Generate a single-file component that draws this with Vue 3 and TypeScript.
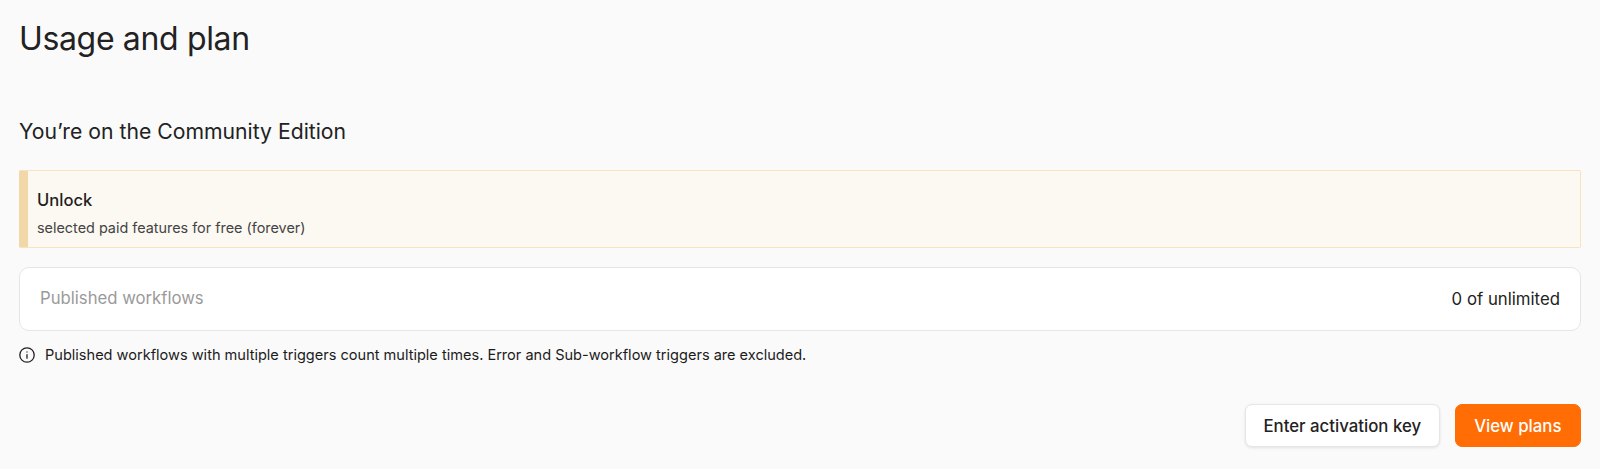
<script setup lang="ts">
</script>

<template>
  <main class="page">
    <h1 class="title">Usage and plan</h1>
    <h2 class="edition">You’re on the Community Edition</h2>
    <section class="callout">
      <div class="callout-title">Unlock</div>
      <div class="callout-text">selected paid features for free (forever)</div>
    </section>
    <section class="usage">
      <span class="usage-label">Published workflows</span>
      <span class="usage-value">0 of unlimited</span>
    </section>
    <p class="note">
      <svg class="info" viewBox="0 0 16 16" fill="none" stroke="#222" stroke-width="1.3" stroke-linecap="round">
        <circle cx="8" cy="8" r="7.2" />
        <path d="M8 7.6v3.6M8 4.9v.1" />
      </svg>
      Published workflows with multiple triggers count multiple times. Error and Sub-workflow triggers are excluded.
    </p>
    <div class="actions">
      <button class="btn secondary">Enter activation key</button>
      <button class="btn primary">View plans</button>
    </div>
  </main>
</template>

<style scoped>
.page {
  height: 469px;
  box-sizing: border-box;
  padding: 19px 19px 0;
  background: #fafafa;
  font-family: Inter, "Liberation Sans", sans-serif;
  color: #222;
  display: flex;
  flex-direction: column;
}
.title {
  margin: 0;
  font-size: 32px;
  line-height: 39px;
  font-weight: 400;
  letter-spacing: -0.35px;
}
.edition {
  margin: 61px 0 0;
  font-size: 21.2px;
  line-height: 24px;
  font-weight: 400;
}
.callout {
  margin-top: 27px;
  height: 78px;
  box-sizing: border-box;
  padding: 19px 9px 0;
  background: #fcf9f2;
  border: 1px solid #f8e2bf;
  border-left: 9px solid #f2d8a8;
  border-radius: 2px;
}
.callout-title {
  font-size: 16.6px;
  line-height: 20px;
  font-weight: 500;
  color: #1f1f1f;
}
.callout-text {
  margin-top: 9px;
  font-size: 14.4px;
  line-height: 18px;
  color: #444;
}
.usage {
  margin-top: 19px;
  height: 64px;
  box-sizing: border-box;
  padding: 0 20px;
  background: #fff;
  border: 1px solid #e6e6e6;
  border-radius: 10px;
  display: flex;
  align-items: center;
  justify-content: space-between;
}
.usage-label {
  margin-bottom: 2px;
  font-size: 16.7px;
  color: #9a9a9a;
}
.usage-value {
  font-size: 16.8px;
  color: #222;
}
.note {
  margin: 15px 0 0;
  display: flex;
  align-items: center;
  gap: 10px;
  font-size: 14.55px;
  line-height: 18px;
  color: #1c1c1c;
}
.info {
  width: 16px;
  height: 16px;
  flex: none;
}
.actions {
  margin-top: 40px;
  display: flex;
  justify-content: flex-end;
  gap: 15px;
}
.btn {
  height: 43px;
  border-radius: 7px;
  font: 500 16.8px Inter, "Liberation Sans", sans-serif;
}
.secondary {
  padding: 0 17.5px;
  background: #fff;
  border: 1px solid #e6e6e6;
  color: #222;
  box-shadow: 0 1px 3px rgba(0, 0, 0, 0.1);
}
.primary {
  padding: 0 18.5px;
  background: #ff6d04;
  border: 1px solid #ff6d04;
  color: #fff;
}
</style>
